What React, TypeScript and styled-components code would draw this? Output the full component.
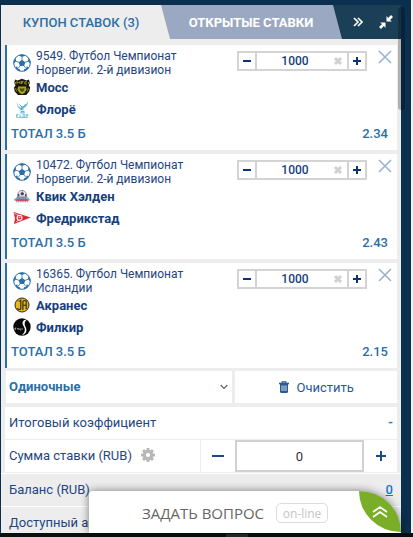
import React, { useState } from "react";
import styled, { createGlobalStyle } from "styled-components";

const NAVY = "#0b2f4e";
const INK = "#1f4680";
const BLUE = "#2a6fa8";
const PALE = "#ededed";
const LINE = "#d3d3d3";

const GlobalStyle = createGlobalStyle`
  *, *::before, *::after { box-sizing: border-box; }
  body {
    margin: 0;
    background: #f2f2f3;
    font-family: Roboto, "Liberation Sans", sans-serif;
    font-size: 13px;
    color: ${INK};
  }
  button, input, select { font: inherit; color: inherit; margin: 0; padding: 0; border: 0; background: none; border-radius: 0; }
  button { cursor: pointer; }
`;

const Page = styled.div`
  position: relative;
  display: flex;
  flex-direction: column;
  height: 100vh;
  overflow: hidden;
`;

const Frame = styled.div`
  flex: 1;
  min-height: 0;
  overflow: hidden;
  margin-right: 2px;
  padding: 5px 10px 0 1px;
  background: ${NAVY};
`;

const Panel = styled.main`
  background: ${PALE};
`;

const Tabs = styled.nav`
  display: grid;
  grid-template-columns: 169fr 172fr 59fr;
  height: 34px;
  background: #1a3f57;
`;

const Tab = styled.button<{ $active?: boolean }>`
  position: relative;
  z-index: ${(p) => (p.$active ? 2 : 1)};
  margin-left: ${(p) => (p.$active ? 0 : -10)}px;
  padding-right: ${(p) => (p.$active ? 9 : 0)}px;
  clip-path: polygon(0 0, calc(100% - 9px) 0, 100% 100%, 0 100%);
  background: ${(p) => (p.$active ? PALE : "#9aa8c1")};
  color: ${(p) => (p.$active ? BLUE : "#fff")};
  font-weight: ${(p) => (p.$active ? 500 : 700)};
  white-space: nowrap;
`;

const TabTools = styled.div`
  display: flex;
  align-items: center;
  justify-content: flex-end;
  gap: 16px;
  padding-right: 8px;
`;

const IconButton = styled.button`
  display: flex;
  align-items: center;
  justify-content: center;
`;

const Slip = styled.div`
  display: flex;
  flex-direction: column;
  gap: 4px;
  padding: 6px 4px 3px;
`;

const Card = styled.article`
  padding: 4px 9px 4px 6px;
  border-left: 2px solid ${BLUE};
  background: #fff;
`;

const CardHead = styled.div`
  display: flex;
  align-items: flex-start;
`;

const Event = styled.h2`
  flex: 1;
  display: flex;
  align-items: center;
  gap: 5px;
  height: 28px;
  margin: 0;
  font-size: 12px;
  font-weight: 400;
  line-height: 14px;
  span { width: 160px; }
`;

const Stepper = styled.div`
  display: grid;
  grid-template-columns: 18px 1fr 18px;
  width: 130px;
  height: 20px;
  margin-top: 2px;
  border: 2px solid ${LINE};
  color: #163f7c;
  font-weight: 500;
  font-size: 12px;
`;

const StepButton = styled(IconButton)<{ $side: "left" | "right" }>`
  border-${(p) => (p.$side === "left" ? "right" : "left")}: 2px solid ${LINE};
`;

const Amount = styled.div`
  display: flex;
  align-items: center;
  padding-right: 4px;
  input { flex: 1; min-width: 0; width: 0; text-align: center; outline: 0; }
`;

const Remove = styled(IconButton)`
  width: 14px;
  height: 14px;
  margin: 1px -4px 0 11px;
`;

const Team = styled.div`
  display: flex;
  align-items: center;
  gap: 5px;
  height: 22px;
  padding-bottom: 2px;
  font-weight: 700;
  color: #173f7d;
`;

const Pick = styled.div`
  display: flex;
  align-items: center;
  justify-content: space-between;
  height: 25px;
  margin-left: -2px;
  font-weight: 500;
  color: ${BLUE};
`;

const Actions = styled.div`
  display: grid;
  grid-template-columns: 227fr 162fr;
  gap: 3px;
  height: 32px;
  padding: 0 4px 0 5px;
`;

const KindField = styled.label`
  position: relative;
  display: flex;
  align-items: center;
  background: #fff;
  select {
    flex: 1;
    height: 100%;
    padding: 0 0 2px 3px;
    appearance: none;
    outline: 0;
    font-weight: 700;
    color: ${BLUE};
  }
  svg { position: absolute; right: 4px; pointer-events: none; }
`;

const Clear = styled(IconButton)`
  gap: 8px;
  background: #fff;
  color: #285a94;
`;

const Summary = styled.section`
  display: flex;
  flex-direction: column;
  gap: 1px;
  padding: 4px 4px 1px;
`;

const Row = styled.div`
  display: flex;
  align-items: center;
  justify-content: space-between;
  height: 32px;
  padding: 0 4px 2px;
  background: #fff;
`;

const StakeRow = styled.div`
  display: grid;
  grid-template-columns: 196fr 34fr 129fr 33fr;
  height: 32px;
  background: #fff;
`;

const StakeLabel = styled.div`
  display: flex;
  align-items: center;
  gap: 9px;
  padding: 0 0 2px 4px;
  border-right: 1px solid ${PALE};
`;

const StakeInput = styled.input`
  width: 100%;
  min-width: 0;
  border: 2px solid #d0d0d0 !important;
  text-align: center;
  color: #333 !important;
  outline: 0;
`;

const BalanceRow = styled.div`
  display: flex;
  align-items: center;
  justify-content: space-between;
  height: 33px;
  padding: 0 8px 2px;
  border-top: 1px solid #fff;
`;

const Dash = styled.output`
  font-weight: 700;
  color: #1f7fd0;
`;

const BalanceLink = styled.a`
  font-weight: 500;
  color: #1577d0;
`;

const ScrollThumb = styled.div`
  position: absolute;
  z-index: 3;
  top: 7px;
  right: 8px;
  width: 7px;
  height: 103px;
  border-radius: 3px;
  background: rgba(0, 0, 0, 0.25);
`;

const Chat = styled.aside`
  position: absolute;
  left: 89px;
  right: 12px;
  bottom: 4px;
  display: flex;
  align-items: flex-start;
  justify-content: space-between;
  height: 42px;
  border-radius: 4px 42px 0 0;
  background: #fff;
  box-shadow: 0 0 8px rgba(0, 0, 0, 0.5);
`;

const Ask = styled.button`
  display: flex;
  align-items: center;
  align-self: stretch;
  gap: 12px;
  padding: 2px 0 0 53px;
  font-family: "Open Sans", "Noto Sans", sans-serif;
  font-size: 15px;
  color: #666;
  white-space: nowrap;
`;

const Badge = styled.span`
  display: flex;
  align-items: center;
  justify-content: center;
  width: 52px;
  height: 20px;
  border: 1px solid #dcdcdc;
  border-radius: 5px;
  font-size: 12px;
  color: #c4c4c4;
`;

const Leaf = styled(IconButton)`
  width: 42px;
  height: 41px;
  border-radius: 0 100% 0 100%;
  background: #7aae29;
`;

const Taskbar = styled.footer`
  flex: none;
  display: flex;
  align-items: flex-end;
  height: 4px;
  padding-left: 226px;
  background: #0d0d0f;
  &::after { content: ""; width: 22px; height: 3px; background: #2c2c2e; }
`;

const Ball = () => (
  <svg width="18" height="18" viewBox="0 0 18 18" aria-hidden="true">
    <circle cx="9" cy="9" r="8.3" fill="#fff" stroke={BLUE} strokeWidth="1" />
    <g fill={BLUE}>
      <path d="M9 5.8l3.3 2.4-1.2 3.8H6.9L5.7 8.2z" />
      <path d="M5.5 1.4L9 3.1l3.5-1.700L9 .5zM.7 9.8l2.400-2.500-.6-3.600L.7 7zM17.300 9.800l-2.400-2.500.6-3.600L17.300 7zM3.200 14.900l3.500.1.6 2.500-2.200-.7zM14.800 14.900l-3.500.1-.6 2.500 2.200-.7zM2.200 13l2-.6.9 2.800-1.700-.1zM15.800 13l-2-.6-.9 2.800 1.700-.1z" />
    </g>
    <path d="M9 3v3M3 7.300l3 1M15 7.300l-3 1M4.600 14.900L7 12M13.400 14.900L11 12" stroke={BLUE} strokeWidth=".8" />
  </svg>
);

const MossLogo = () => (
  <svg width="18" height="18" viewBox="0 0 18 18" aria-hidden="true">
    <path d="M2 1.500l2.500 1L9 .8l4.500 1.700 2.500-1 .8 3.500-1 2.500 1.400 2-1 4-3 3.500H5l-3.300-3.500L1 9.500l1.500-2L1.300 5z" fill="#17170a" />
    <path d="M4 6V3.500l1.500 1.500L7 3.500V6M8.500 6V3.500h2M8.500 4.800h1.500M14 3.800h-2.200V6H14" fill="none" stroke="#b9b420" strokeWidth=".8" />
    <path d="M5 8.500h8l.5 3-2 3.500-2.500 1.200L6.500 15l-2-3.500z" fill="#a9a61e" />
    <path d="M6.500 10l2.500.8 2.500-.8-.5 2.500L9 14l-2-1.500z" fill="#4c4a10" />
    <path d="M2.600 10l1 3.500M15.400 10l-1 3.500M2.500 4v2M15.500 4v2" stroke="#918e1d" strokeWidth=".9" />
  </svg>
);

const FloroLogo = () => (
  <svg width="18" height="18" viewBox="0 0 18 18" aria-hidden="true">
    <path d="M4 1.500c.2 3.300 1.500 5 4 6.200l1-2 1.500.8C12 5 14 4 14.500 1c1 3-.7 5.500-3.500 7l-.8 2.200H8C5.500 8.500 3.300 5.500 4 1.500z" fill="#7fc3dd" />
    <path d="M6.500 4.500L9 7l-1 3M12.800 4L10 7.500" stroke="#3795bd" strokeWidth=".8" fill="none" />
    <path d="M7 10.500h5v2.500H7z" fill="#b8e0ee" />
    <path d="M8 11.500h3M7.500 13h4" stroke="#49a7cb" strokeWidth=".7" />
    <path d="M3.500 17v-2.500h2M3.500 15.700h1.500M7 14.300V17h1.500M10 14.500h1.700V17H10zM13.300 17v-2.500h1.700v1.300h-1.500M3 17.500h12" stroke="#55b2d4" strokeWidth=".7" fill="none" />
  </svg>
);

const KvikLogo = () => (
  <svg width="18" height="18" viewBox="0 0 18 18" aria-hidden="true">
    <path d="M4.500 10C4.500 5.300 6 3.500 9 3.500s4.800 2 4.800 6.500z" fill="#e5e8ec" stroke="#6c7788" strokeWidth=".7" />
    <path d="M7.500 6L9.300 5 11 6.200 10.400 8.300H8zM4.900 7.500l1.200-1 .4 2.500-1.500.7zM12.100 6.700l1.200 1 .2 2-1.600-.5zM8.500 3.700h1.800l-.9.9z" fill="#3b4453" />
    <path d="M.5 13L4.200 9.700h9.600l3.700 3.300-3.500 1.300H4z" fill="#86a5c6" />
    <path d="M2 13.200l2.500-1.100h9l2.500 1.100-2.500.7h-9z" fill="#d94956" />
    <path d="M4.500 10.900h9M3 14.800h12" stroke="#42658e" strokeWidth=".7" strokeDasharray="1.200 .6" />
  </svg>
);

const FredrikstadLogo = () => (
  <svg width="18" height="18" viewBox="0 0 18 18" aria-hidden="true">
    <path d="M.5 3L17.700 8.500 1 15l1-5.500z" fill="#de2635" />
    <circle cx="6.500" cy="8.800" r="3" fill="#fff" />
    <path d="M4.800 7.300h3.400v2.400q-1.700 2.200-3.400 0z" fill="#d5303c" />
    <path d="M1 4.500l4 1.200M3 12.700l3-1.400" stroke="#fff" strokeWidth=".6" fill="none" />
    <path d="M5.500 8.500h2" stroke="#fff" strokeWidth=".7" />
  </svg>
);

const AkranesLogo = () => (
  <svg width="18" height="18" viewBox="0 0 18 18" aria-hidden="true">
    <circle cx="9" cy="9" r="7" fill="#e5b61d" stroke="#29281b" strokeWidth="1" />
    <path d="M7.800 3.500v8.800c0 1.700-3 1.700-3.300-.3M5.500 5h2.300M9.900 14V5.500c0-1.300 3.300-1.300 3.300 0V13M9.900 9.200h3.300" fill="none" stroke="#272618" strokeWidth="1.100" />
  </svg>
);

const FylkirLogo = () => (
  <svg width="18" height="18" viewBox="0 0 18 18" aria-hidden="true">
    <circle cx="9" cy="9" r="8.700" fill="#080808" />
    <path d="M14 1.500C9.500 1.500 8.500 5 10.500 8s2 6.500-2 9.200c5-.7 6-5.200 3.800-8.700C11 6 11.500 3.500 14 1.500z" fill="#fff" />
    <path d="M2 12v-2h1.300M2 11h1M4.300 10l.8 1 .7-1M5 11v1M7 10v2h1M9 10v2" stroke="#ddd" strokeWidth=".6" fill="none" />
  </svg>
);

const Sign = ({ plus, size, weight, color = "#0f3474" }: { plus?: boolean; size: number; weight: number; color?: string }) => (
  <svg width={size} height={size} viewBox={`0 0 ${size} ${size}`} aria-hidden="true">
    <rect x="0" y={(size - weight) / 2} width={size} height={weight} fill={color} />
    {plus && <rect y="0" x={(size - weight) / 2} height={size} width={weight} fill={color} />}
  </svg>
);

const Gear = () => (
  <svg width="14" height="14" viewBox="0 0 14 14" aria-hidden="true">
    <g fill="#b8b8b8">
      {[0, 45, 90, 135].map((a) => (
        <rect key={a} x="5.500" y="0" width="3" height="14" rx=".5" transform={`rotate(${a} 7 7)`} />
      ))}
      <circle cx="7" cy="7" r="5.300" />
    </g>
    <circle cx="7" cy="7" r="2.100" fill="#fff" />
  </svg>
);

const Trash = () => (
  <svg width="10" height="12" viewBox="0 0 10 12" fill="none" stroke="#285a94" aria-hidden="true">
    <path d="M0 2.500h10" strokeWidth="1.600" />
    <path d="M3.200 2V.8h3.600V2" strokeWidth="1.200" />
    <path d="M1 3h8v7.500q0 1.500-1.500 1.500h-5Q1 12 1 10.500z" fill="#285a94" stroke="none" />
    <path d="M3 4.500V10M5 4.500V10M7 4.500V10" stroke="#fff" strokeWidth=".8" />
  </svg>
);

interface Bet {
  title: string;
  teams: { name: string; Logo: () => React.ReactElement }[];
  pick: string;
  odds: string;
}

const bets: Bet[] = [
  {
    title: "9549. Футбол Чемпионат Норвегии. 2-й дивизион",
    teams: [{ name: "Мосс", Logo: MossLogo }, { name: "Флорё", Logo: FloroLogo }],
    pick: "ТОТАЛ 3.5 Б",
    odds: "2.34",
  },
  {
    title: "10472. Футбол Чемпионат Норвегии. 2-й дивизион",
    teams: [{ name: "Квик Хэлден", Logo: KvikLogo }, { name: "Фредрикстад", Logo: FredrikstadLogo }],
    pick: "ТОТАЛ 3.5 Б",
    odds: "2.43",
  },
  {
    title: "16365. Футбол Чемпионат Исландии",
    teams: [{ name: "Акранес", Logo: AkranesLogo }, { name: "Филкир", Logo: FylkirLogo }],
    pick: "ТОТАЛ 3.5 Б",
    odds: "2.15",
  },
];

function BetCard({ bet }: { bet: Bet }) {
  const [amount, setAmount] = useState("1000");
  const step = (by: number) => setAmount(String(Math.max(0, Number(amount) + by)));
  return (
    <Card>
      <CardHead>
        <Event>
          <Ball />
          <span>{bet.title}</span>
        </Event>
        <Stepper>
          <StepButton $side="left" aria-label="Уменьшить" onClick={() => step(-100)}>
            <Sign size={8} weight={2} />
          </StepButton>
          <Amount>
            <input aria-label="Сумма" value={amount} onChange={(e) => setAmount(e.target.value)} />
            <IconButton aria-label="Сбросить" onClick={() => setAmount("")}>
              <svg width="10" height="10" viewBox="0 0 10 10" aria-hidden="true">
                <path d="M2 2l6 6M8 2L2 8" stroke="#d0d0d0" strokeWidth="3" />
              </svg>
            </IconButton>
          </Amount>
          <StepButton $side="right" aria-label="Увеличить" onClick={() => step(100)}>
            <Sign plus size={8} weight={2} />
          </StepButton>
        </Stepper>
        <Remove aria-label="Удалить ставку">
          <svg width="14" height="14" viewBox="0 0 14 14" aria-hidden="true">
            <path d="M1 1l12 12M13 1L1 13" stroke="#9db0cf" strokeWidth="1.600" />
          </svg>
        </Remove>
      </CardHead>
      {bet.teams.map(({ name, Logo }) => (
        <Team key={name}>
          <Logo />
          {name}
        </Team>
      ))}
      <Pick>
        <span>{bet.pick}</span>
        <span>{bet.odds}</span>
      </Pick>
    </Card>
  );
}

export default function App() {
  const [stake, setStake] = useState("0");
  const move = (by: number) => setStake(String(Math.max(0, Number(stake) + by)));
  return (
    <Page>
      <GlobalStyle />
      <Frame>
        <Panel>
          <Tabs>
            <Tab $active>КУПОН СТАВОК (3)</Tab>
            <Tab>ОТКРЫТЫЕ СТАВКИ</Tab>
            <TabTools>
              <IconButton aria-label="Свернуть вправо">
                <svg width="10" height="10" viewBox="0 0 10 10" fill="none" stroke="#fff" strokeWidth="1.700" aria-hidden="true">
                  <path d="M1 1l4 4-4 4M5 1l4 4-4 4" />
                </svg>
              </IconButton>
              <IconButton aria-label="Сжать">
                <svg width="14" height="14" viewBox="0 0 14 14" fill="#fff" aria-hidden="true">
                  <path d="M7.500 1v5.500H13L11 4.900l3-2.900L12 0 9.100 3zM6.500 13V7.500H1L3 9.100 0 12l2 2 2.900-3z" />
                </svg>
              </IconButton>
            </TabTools>
          </Tabs>
          <Slip>
            {bets.map((bet) => (
              <BetCard key={bet.title} bet={bet} />
            ))}
          </Slip>
          <Actions>
            <KindField>
              <select aria-label="Тип ставки" defaultValue="single">
                <option value="single">Одиночные</option>
                <option value="express">Экспресс</option>
              </select>
              <svg width="8" height="6" viewBox="0 0 8 6" fill="none" stroke="#55657a" strokeWidth="1.200" aria-hidden="true">
                <path d="M.7 1L4 4.500 7.300 1" />
              </svg>
            </KindField>
            <Clear>
              <Trash />
              Очистить
            </Clear>
          </Actions>
          <Summary>
            <Row>
              <span>Итоговый коэффициент</span>
              <Dash>-</Dash>
            </Row>
            <StakeRow>
              <StakeLabel>
                <label htmlFor="stake">Сумма ставки (RUB)</label>
                <IconButton aria-label="Настройки">
                  <Gear />
                </IconButton>
              </StakeLabel>
              <IconButton aria-label="Уменьшить сумму" onClick={() => move(-100)}>
                <Sign size={12} weight={2} color="#1c4a86" />
              </IconButton>
              <StakeInput id="stake" value={stake} onChange={(e) => setStake(e.target.value)} />
              <IconButton aria-label="Увеличить сумму" onClick={() => move(100)}>
                <Sign plus size={10} weight={2} color="#1c4a86" />
              </IconButton>
            </StakeRow>
          </Summary>
          <BalanceRow>
            <span>Баланс (RUB)</span>
            <BalanceLink href="#balance">0</BalanceLink>
          </BalanceRow>
          <BalanceRow>
            <span>Доступный аванс</span>
          </BalanceRow>
        </Panel>
      </Frame>
      <ScrollThumb />
      <Chat>
        <Ask>
          ЗАДАТЬ ВОПРОС
          <Badge>on-line</Badge>
        </Ask>
        <Leaf aria-label="Развернуть">
          <svg width="16" height="14" viewBox="0 0 16 14" fill="none" stroke="#fff" strokeWidth="1.700" aria-hidden="true">
            <path d="M1 7l7-5 7 5M1 12l7-5 7 5" />
          </svg>
        </Leaf>
      </Chat>
      <Taskbar />
    </Page>
  );
}
